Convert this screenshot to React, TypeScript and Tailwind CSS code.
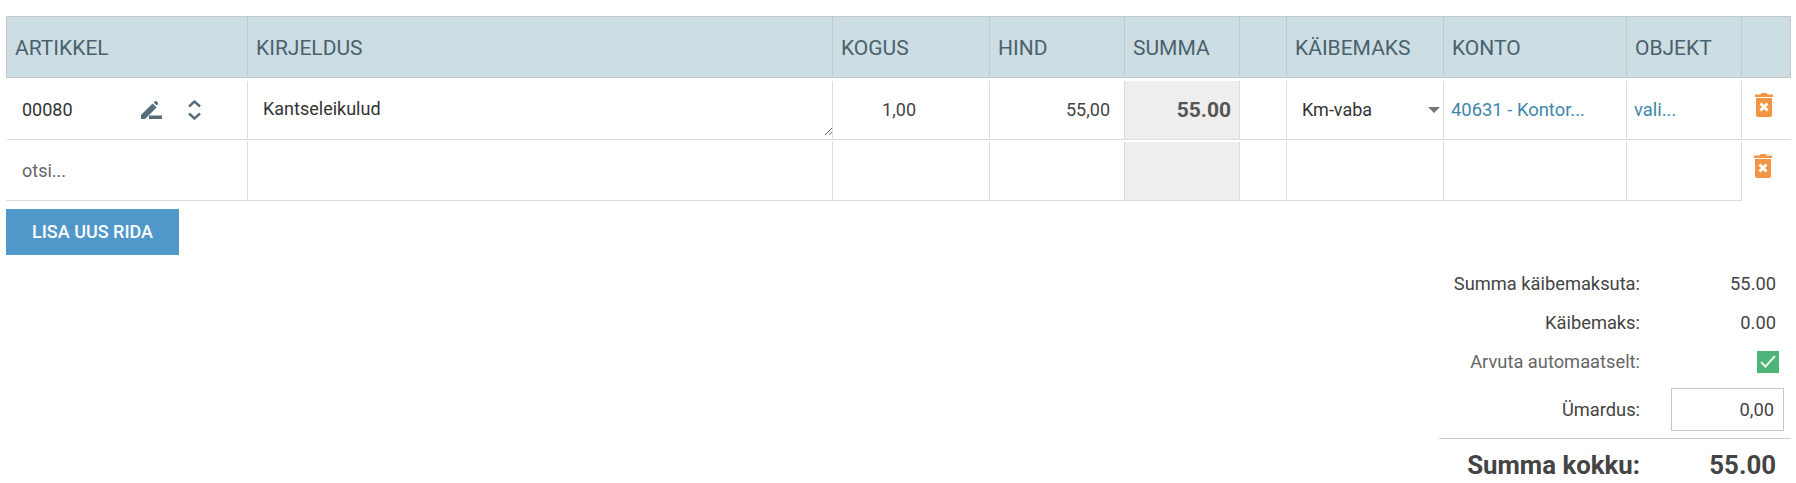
const gridCols = "grid grid-cols-[241px_585px_157px_135px_115px_47px_157px_183px_115px_50px]"

const headers = ["ARTIKKEL", "KIRJELDUS", "KOGUS", "HIND", "SUMMA", "", "KÄIBEMAKS", "KONTO", "OBJEKT", ""]

function PencilIcon() {
  return (
    <svg width="21" height="18" viewBox="0 0 21 18" fill="#546e7a">
      <path d="M0 18V14L11.600 2.400L15.600 6.400L4 18Z" />
      <path d="M12.700 1.500L13.600.6C14.300-.1 15.100-.1 15.800.6L16.500 1.300C17.200 2 17.200 2.800 16.500 3.500L15.600 4.400L16.500 5.300Z" />
      <rect x="8" y="14.500" width="13" height="3.500" />
    </svg>
  )
}

function UnfoldIcon() {
  return (
    <svg width="13" height="20" viewBox="0 0 13 20" fill="none" stroke="#546e7a" strokeWidth="2.400">
      <path d="M1 6.500L6.500 1.500L12 6.500" />
      <path d="M1 13.500L6.500 18.500L12 13.500" />
    </svg>
  )
}

function TrashIcon() {
  return (
    <svg width="18" height="24" viewBox="0 0 18 24" className="block">
      <path d="M0 1.500H5.500L6.500 0H11.500L12.500 1.500H18V4H0Z" fill="#f49546" />
      <path d="M1 5H17V22C17 23.200 16.200 24 15 24H3C1.800 24 1 23.200 1 22Z" fill="#f49546" />
      <path d="M5.500 10.500L12.500 17.500M12.500 10.500L5.500 17.500" stroke="#fff" strokeWidth="2.800" />
    </svg>
  )
}

function TotalRow({ label, children, muted }: { label: string; children: React.ReactNode; muted?: boolean }) {
  return (
    <div className="flex items-center h-[39px]">
      <div className={`w-[201px] text-right whitespace-nowrap ${muted ? "text-[#666]" : "text-[#444]"}`}>{label}</div>
      <div className="flex-1 flex justify-end">{children}</div>
    </div>
  )
}

export default function App() {
  return (
    <div className="w-[1796px] h-[483px] overflow-hidden bg-white pt-4 pl-[6px] text-[18px] leading-6 text-[#333] font-['Roboto',sans-serif]">
      {/* header */}
      <div className={`${gridCols} w-[1785px] h-[62px] bg-[#cddde4] border-y border-r border-[#c4c8ca] text-[21px] text-[#4a626d]`}>
        {headers.map((h, i) => (
          <div key={i} className="border-l border-[#c4c8ca] pl-[8px] pt-[19px]">{h}</div>
        ))}
      </div>

      {/* invoice line */}
      <div className={`${gridCols} h-[62px] border-b border-[#dcdcdc] pt-[3px] w-[1784px] ml-px`}>
        <div className="flex items-center pl-[16px] -ml-px">
          <span className="w-[119px]">00080</span>
          <PencilIcon />
          <span className="ml-[26px]"><UnfoldIcon /></span>
        </div>
        <div className="border-l border-[#dcdcdc] -ml-px">
          <textarea
            defaultValue="Kantseleikulud"
            className="block w-full h-[55px] pl-[15px] pt-4 outline-none resize text-[#333]"
          />
        </div>
        <div className="border-l border-[#dcdcdc] -ml-px flex items-center justify-end pr-[74px] text-[#444]">1,00</div>
        <div className="border-l border-[#dcdcdc] -ml-px flex items-center justify-end pr-[15px] text-[#444]">55,00</div>
        <div className="border-x border-[#dcdcdc] -ml-px bg-[#eeeeee] flex items-center justify-end pr-[8px] text-[21px] font-bold text-[#555]">55.00</div>
        <div className="-ml-px" />
        <div className="border-l border-[#dcdcdc] -ml-px flex items-center justify-between pl-[15px] pr-[4px]">
          <span>Km-vaba</span>
          <span className="w-0 h-0 border-x-[6px] border-x-transparent border-t-[6px] border-t-[#777]" />
        </div>
        <div className="border-l border-[#dcdcdc] -ml-px flex items-center pl-[7px] text-[18.4px] text-[#3f86ad]">40631 - Kontor...</div>
        <div className="border-l border-[#dcdcdc] -ml-px flex items-center pl-[7px] text-[18.4px] text-[#3f86ad]">vali...</div>
        <div className="border-l border-[#dcdcdc] -ml-px pl-[13px] pt-[12px]"><TrashIcon /></div>
      </div>

      {/* search line */}
      <div className={`${gridCols} h-[61px] pt-[2px] w-[1784px] ml-px`}>
        <div className="border-b border-[#dcdcdc] -ml-px pl-[16px] flex items-center">
          <input placeholder="otsi..." className="w-full outline-none placeholder:text-[#666]" />
        </div>
        <div className="border-l border-b border-[#dcdcdc] -ml-px" />
        <div className="border-l border-b border-[#dcdcdc] -ml-px" />
        <div className="border-l border-b border-[#dcdcdc] -ml-px" />
        <div className="border-x border-b border-[#dcdcdc] -ml-px bg-[#eeeeee]" />
        <div className="border-b border-[#dcdcdc] -ml-px" />
        <div className="border-l border-b border-[#dcdcdc] -ml-px" />
        <div className="border-l border-b border-[#dcdcdc] -ml-px" />
        <div className="border-x border-b border-[#dcdcdc] -ml-px" />
        <div className="pl-[13px] pt-[12px] -ml-px"><TrashIcon /></div>
      </div>

      <button className="block mt-2 w-[173px] h-[46px] bg-[#5098c9] text-white text-[18px] font-medium">LISA UUS RIDA</button>

      {/* totals */}
      <div className="ml-[1433px] w-[352px] mt-[9px] text-[18.3px]">
        <TotalRow label="Summa käibemaksuta:"><span className="pr-[15px] text-[#444]">55.00</span></TotalRow>
        <TotalRow label="Käibemaks:"><span className="pr-[15px] text-[#444]">0.00</span></TotalRow>
        <TotalRow label="Arvuta automaatselt:" muted>
          <span className="mr-[12px] w-[22px] h-[22px] bg-[#4fb477] flex items-center justify-center">
            <svg width="16" height="13" viewBox="0 0 16 13" fill="none" stroke="#e8f6ee" strokeWidth="2"><path d="M1 7L5.500 11.500L15 1" /></svg>
          </span>
        </TotalRow>
        <div className="mt-[7px] h-[43px] flex items-center">
          <div className="w-[201px] text-right text-[#444]">Ümardus:</div>
          <input defaultValue="0,00" className="ml-[31px] w-[113px] h-[43px] border border-[#c8c8c8] text-right pr-[9px] text-[#444] outline-none" />
        </div>
        <div className="mt-[7px] border-t border-[#cccccc] flex items-center h-[46px] pt-[6px] text-[25.8px] font-bold text-[#444]">
          <div className="w-[201px] text-right whitespace-nowrap">Summa kokku:</div>
          <div className="flex-1 text-right pr-[15px]">55.00</div>
        </div>
      </div>
    </div>
  )
}
